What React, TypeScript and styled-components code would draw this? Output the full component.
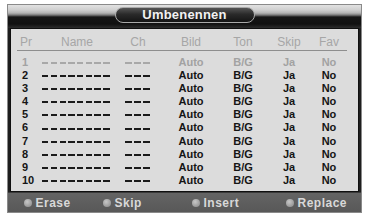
import React from "react";
import styled, { createGlobalStyle } from "styled-components";

const Global = createGlobalStyle`
  html, body { margin: 0; padding: 0; background: #ffffff; }
  body { font-family: "Liberation Sans", Arial, sans-serif; }
`;

const Frame = styled.div`
  margin: 4px 0 0 7px;
  width: 355px;
  height: 209px;
  box-sizing: border-box;
  border: 1px solid #8a8a8a;
  background: #1e1e1e;
  display: flex;
  flex-direction: column;
`;

const TopBand = styled.div`
  height: 23px;
  flex: none;
  background: linear-gradient(
    180deg,
    #e2e2e2 0px,
    #cfcfcf 5px,
    #b4b4b4 8px,
    #7a7a7a 10px,
    #161616 12px,
    #111111 19px,
    #2c2c2c 23px
  );
  display: flex;
  justify-content: center;
  align-items: flex-start;
`;

const TitlePill = styled.div`
  margin-top: 2px;
  width: 140px;
  height: 16px;
  box-sizing: border-box;
  border-radius: 8px;
  border: 1px solid #a9a9a9;
  background: linear-gradient(180deg, #555555 0%, #2a2a2a 45%, #141414 100%);
  color: #f2f2f2;
  font-size: 13px;
  font-weight: bold;
  line-height: 14px;
  text-align: center;
  letter-spacing: 0.2px;
`;

const Panel = styled.div`
  margin: 0 2px;
  height: 164px;
  flex: none;
  box-sizing: border-box;
  border: 1px solid #101010;
  background: #dcdcdc;
  padding: 6.5px 0 0 3px;
`;

const Cols = `
  display: grid;
  grid-template-columns: 24px 78px 44px 62px 42px 50px 30px;
`;

const HeadRow = styled.div`
  ${Cols}
  height: 13px;
  line-height: 13px;
  font-size: 12px;
  color: #a6a6a6;
  text-align: center;
`;

const Underline = styled.div`
  height: 1px;
  margin: 1px 11px 5px 3px;
  background: #8e8e8e;
`;

const Row = styled.div<{ $dim?: boolean }>`
  ${Cols}
  height: 13.2px;
  line-height: 13.2px;
  font-size: 11px;
  font-weight: bold;
  color: ${(p) => (p.$dim ? "#a2a2a2" : "#151515")};
  text-align: center;
  align-items: center;
`;

const Num = styled.div`
  text-align: left;
  padding-left: 8px;
`;

const Cell = styled.div``;

const DashCell = styled.div`
  display: flex;
  justify-content: center;
  align-items: center;
  padding-top: 1px;
`;

const Dashes = styled.span<{ $w: number; $p: number; $dim?: boolean }>`
  display: block;
  width: ${(p) => p.$w}px;
  height: 2px;
  background: repeating-linear-gradient(
    90deg,
    ${(p) => (p.$dim ? "#a8a8a8" : "#1a1a1a")} 0 ${(p) => p.$p - 2.4}px,
    transparent ${(p) => p.$p - 2.4}px ${(p) => p.$p}px
  );
`;

const Footer = styled.div`
  flex: 1;
  background: linear-gradient(180deg, #646464 0%, #585858 100%);
  border-top: 1px solid #3a3a3a;
  display: grid;
  grid-template-columns: 79px 89px 94px 1fr;
  align-items: center;
  padding-left: 15.5px;
`;

const Key = styled.div`
  display: flex;
  align-items: center;
  gap: 4px;
  color: #d8d8d8;
  font-size: 12px;
  font-weight: bold;
  letter-spacing: 0.5px;
`;

const Dot = styled.span`
  width: 8px;
  height: 8px;
  border-radius: 50%;
  background: radial-gradient(circle at 40% 35%, #c8c8c8 0%, #a0a0a0 60%, #8a8a8a 100%);
  flex: none;
`;

const heads = ["Pr", "Name", "Ch", "Bild", "Ton", "Skip", "Fav"];

export default function App() {
  const rows = Array.from({ length: 10 }, (_, i) => i + 1);
  return (
    <>
      <Global />
      <Frame>
        <TopBand>
          <TitlePill>Umbenennen</TitlePill>
        </TopBand>
        <Panel>
          <HeadRow>
            {heads.map((h) => (
              <Cell key={h}>{h}</Cell>
            ))}
          </HeadRow>
          <Underline />
          {rows.map((n) => {
            const dim = n === 1;
            return (
              <Row key={n} $dim={dim}>
                <Num>{n}</Num>
                <DashCell>
                  <Dashes $w={70} $p={8.75} $dim={dim} />
                </DashCell>
                <DashCell>
                  <Dashes $w={27} $p={9} $dim={dim} />
                </DashCell>
                <Cell>Auto</Cell>
                <Cell>B/G</Cell>
                <Cell>Ja</Cell>
                <Cell>No</Cell>
              </Row>
            );
          })}
        </Panel>
        <Footer>
          <Key>
            <Dot />
            Erase
          </Key>
          <Key>
            <Dot />
            Skip
          </Key>
          <Key>
            <Dot />
            Insert
          </Key>
          <Key>
            <Dot />
            Replace
          </Key>
        </Footer>
      </Frame>
    </>
  );
}
